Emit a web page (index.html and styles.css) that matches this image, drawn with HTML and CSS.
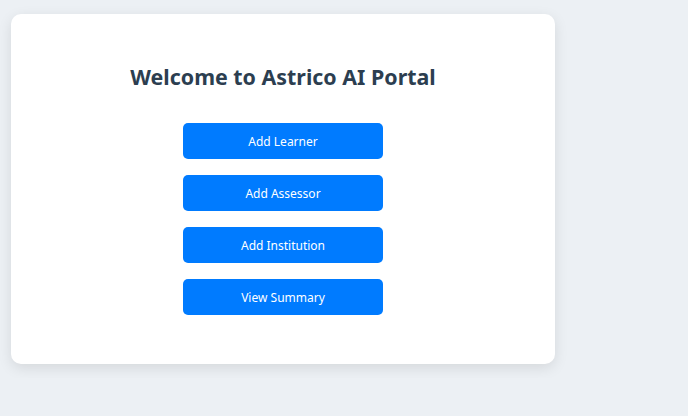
FILE: index.html
```html
<!DOCTYPE html>
<html>
<head>
<meta charset="utf-8">
<link rel="stylesheet" href="styles.css">
</head>
<body>
<div class="card">
  <h1 class="title">Welcome to Astrico AI Portal</h1>
  <div class="actions">
    <button class="btn">Add Learner</button>
    <button class="btn">Add Assessor</button>
    <button class="btn">Add Institution</button>
    <button class="btn">View Summary</button>
  </div>
</div>
</body>
</html>
```
FILE: styles.css
```css
html, body {
  margin: 0;
  background: #ecf0f4;
  font-family: "Noto Sans", "Open Sans", sans-serif;
}
body {
  padding: 14px 11px;
}
.card {
  width: 544px;
  box-sizing: border-box;
  height: 350px;
  background: #fff;
  border-radius: 10px;
  box-shadow: 0 4px 14px rgba(0, 0, 0, 0.1);
  padding: 48px 0 48px;
  display: flex;
  flex-direction: column;
  align-items: center;
}
.title {
  margin: 0 0 31px;
  font-size: 21.4px;
  line-height: 30px;
  font-weight: 700;
  color: #2c3e50;
}
.actions {
  display: flex;
  flex-direction: column;
  gap: 16px;
}
.btn {
  width: 200px;
  height: 36px;
  border: none;
  border-radius: 5px;
  background: #007bff;
  color: #fff;
  font-family: "Noto Sans", "Open Sans", sans-serif;
  font-size: 12px;
  padding: 0;
}
```
